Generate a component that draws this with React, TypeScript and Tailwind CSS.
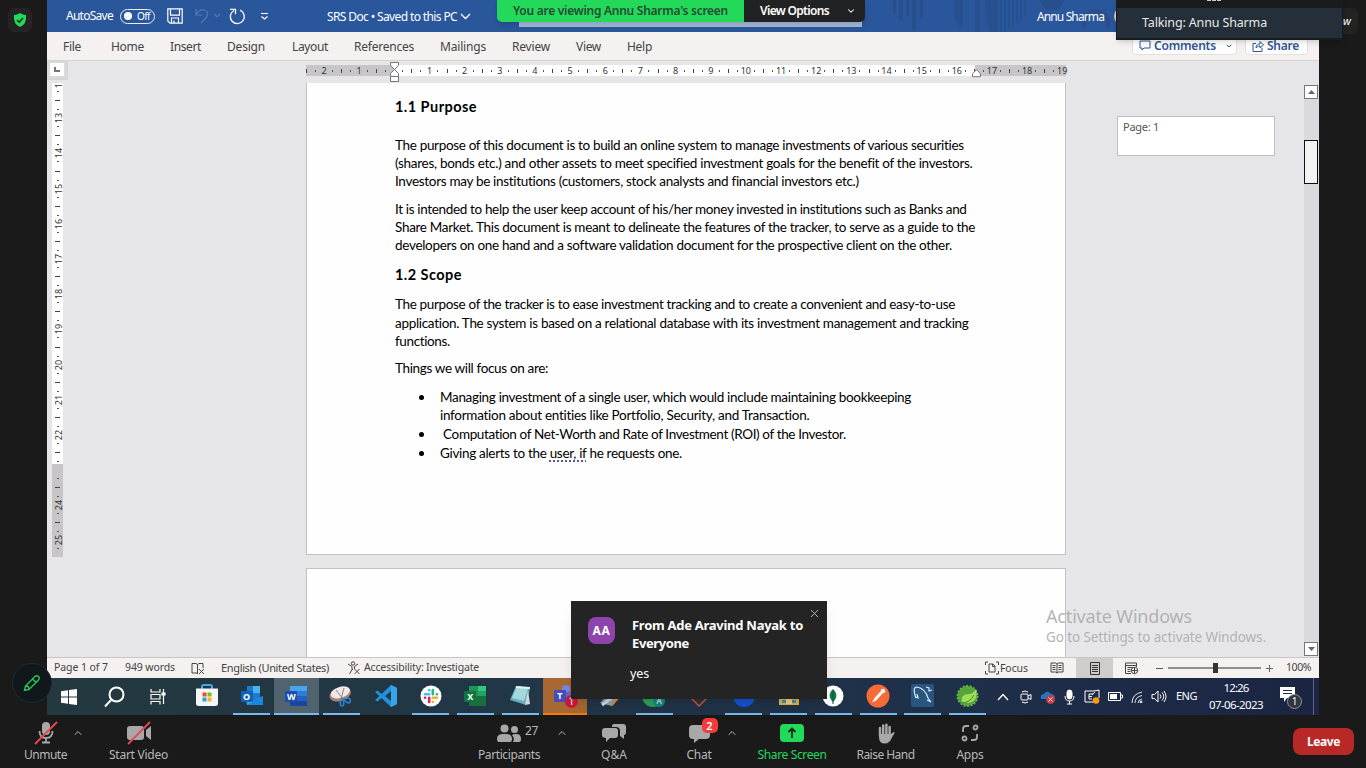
import { useLayoutEffect, useRef, useState, type ReactNode } from "react";
import { ChevronDown, ChevronUp, X } from "lucide-react";

/* Text run that is tracked so that it fills exactly w pixels. */
function Fit({ w, className = "", children }: { w: number; className?: string; children: ReactNode }) {
  const ref = useRef<HTMLSpanElement>(null);
  const [ls, setLs] = useState(0);
  useLayoutEffect(() => {
    const el = ref.current;
    if (!el) return;
    const n = (el.textContent || "").length || 1;
    setLs((w - el.getBoundingClientRect().width) / n);
  }, [w]);
  return (
    <span ref={ref} className={"inline-block shrink-0 whitespace-pre " + className} style={{ letterSpacing: ls + "px" }}>
      {children}
    </span>
  );
}

function TitleBar() {
  return (
    <div className="relative isolate flex h-8 shrink-0 items-center bg-[#2a569b] text-white">
      <svg className="absolute left-[833px] top-0 -z-10" width="250" height="32" fill="none">
        <g fill="#264f8c">
          <path d="M13 0h3v14h-3zM19 0h4v21h-4zM26 0h3v16h-3zM32 0h4v30h-4zM40 0h3v18h-3z" />
          <path d="M74 0h9v28q-6-2-9-12zM95 0h5v32h-5zM105 0h13v32h-8q-5-10-5-32z" opacity=".7" />
          <path d="M120 0h2v32h-2zM124 0h2v32h-2zM128 0h2v30h-2zM132 0h2v27h-2zM136 0h2v23h-2zM140 0h2v20h-2zM144 0h2v16h-2z" opacity=".7" />
          <path d="M160 0h24q-2 10-12 10T160 0z" />
        </g>
        <path d="M205 28a12 12 0 1 1 22 0" stroke="#274f8d" strokeWidth="5" />
      </svg>
      <Fit w={47} className="ml-[19px] text-xs">AutoSave</Fit>
      <div className="ml-[7px] flex h-[15px] w-[35px] items-center rounded-full border border-white/90 pl-[3px]">
        <span className="h-2 w-2 rounded-full bg-white" />
        <Fit w={13} className="ml-[5px] text-[10px] leading-3">Off</Fit>
      </div>
      <svg className="ml-[12px]" width="16" height="16" fill="none" stroke="#fff" strokeWidth="1.2">
        <path d="M.8.8h14.4v14.4H3L.8 13zM3.500.8v6.4h9V.8M4.500 15v-5h7v5M7 15v-2.500" />
      </svg>
      <svg className="ml-[11px]" width="26" height="16" fill="none" stroke="#5579b3" strokeWidth="1.2">
        <path d="M2 1v6h6M2 6.500C5 2 8 1.500 10 2c5 1.300 4 6 1 9l-4 4M20 6l3 3 3-3" />
      </svg>
      <svg className="ml-[9px]" width="17" height="17" fill="none" stroke="#fff" strokeWidth="1.300">
        <path d="M11 2.200A7 7 0 1 1 5 2.500M1 1.300h5.500v5" />
      </svg>
      <svg className="ml-[14px]" width="9" height="8" fill="none" stroke="#fff" strokeWidth="1.200">
        <path d="M1 1.500h7M1.500 4.500l3 2.500 3-2.500" />
      </svg>
      <Fit w={130} className="ml-[58px] mt-[2px] text-xs">SRS Doc • Saved to this PC</Fit>
      <svg className="ml-[3px]" width="11" height="7" fill="none" stroke="#fff" strokeWidth="1.300"><path d="M1 1l4.500 4.500L10 1" /></svg>
      <div className="mb-[5px] ml-[48px] h-[27px] w-[343px] bg-[#a5b9d8]" />
      <Fit w={67} className="ml-[175px] mt-[2px] text-xs">Annu Sharma</Fit>
      <span className="ml-[10px] h-5 w-5 rounded-full bg-[#d8cbbd]" />
    </div>
  );
}

const tabs: [string, number, number][] = [
  ["File", 16, 18], ["Home", 30, 33], ["Insert", 26, 31], ["Design", 26, 38], ["Layout", 27, 36],
  ["References", 26, 60], ["Mailings", 26, 46], ["Review", 26, 38], ["View", 26, 25], ["Help", 26, 25],
];

function Ribbon() {
  return (
    <div className="flex h-[29px] shrink-0 items-center border-b border-[#d9d3d0] bg-[#f4f1f0] text-[#444]">
      {tabs.map(([t, ml, w]) => (
        <span key={t} className="shrink-0 pb-[2px]" style={{ marginLeft: ml }}>
          <Fit w={w} className="text-xs">{t}</Fit>
        </span>
      ))}
      <div className="ml-auto mr-[11px] flex h-[23px] gap-2 self-start pt-0 text-[#2f5597]">
        <div className="flex w-[105px] items-center rounded-sm border border-[#e4e0de] bg-white pl-[6px] pt-[4px]">
          <svg width="12" height="11" fill="none" stroke="currentColor"><path d="M1 1h10v7H5L3 10V8H1z" /></svg>
          <Fit w={62} className="ml-[3px] text-xs font-semibold">Comments</Fit>
          <ChevronDown className="ml-[9px]" size={8} strokeWidth={3} />
        </div>
        <div className="flex w-[63px] items-center rounded-sm border border-[#e4e0de] bg-white pl-[6px] pt-[4px]">
          <svg width="12" height="12" fill="none" stroke="currentColor"><path d="M4 3.500H1v8h9V8M4 8c0-3 2-4 4-4V1.500L11.500 5 8 8V6C6 6 5 7 4 8z" /></svg>
          <Fit w={32} className="ml-[3px] text-xs font-semibold">Share</Fit>
        </div>
      </div>
    </div>
  );
}

const hNums = ["2", "1", "", ...Array.from({ length: 18 }, (_, i) => String(i + 1)), ""];
const vNums = ["12", "13", "14", "15", "16", "17", "18", "19", "20", "21", "22", "", "24", "25"];

function HorizontalRuler() {
  return (
    <div className="relative mt-[4px] h-[11px]">
      <div className="flex h-[11px] w-[760px] items-center overflow-hidden bg-[linear-gradient(to_right,#c7c5c7_88px,#fff_88px,#fff_669px,#c7c5c7_669px)]">
        {hNums.map((n, i) => (
          <div key={i} className="flex h-[11px] w-[35.170px] shrink-0 items-center">
            <span className="h-1 w-px bg-[#444]" />
            <span className="ml-[8px] h-[2px] w-px bg-[#555]" />
            <span className="ml-px w-[14px] text-center text-[9px] leading-[11px] text-[#333]">{n}</span>
            <span className="ml-px h-[2px] w-px bg-[#555]" />
          </div>
        ))}
      </div>
      <svg className="absolute -top-[3px] left-[84px]" width="9" height="21" fill="#fff" stroke="#777">
        <path d="M.5.500h8v3l-4 4 4 4v3h-8v-3l4-4-4-4zM.5 14.500h8v5h-8z" />
      </svg>
      <svg className="absolute left-[666px] top-[4px]" width="9" height="9" fill="#fff" stroke="#777">
        <path d="M4.500.700l4 4v3h-8v-3z" />
      </svg>
      <span className="absolute left-[751px] top-0 text-[9px] leading-[11px] text-[#333]">19</span>
    </div>
  );
}

function VerticalRuler() {
  return (
    <div className="ml-[5px] mt-[3px] flex h-[474px] w-[11px] flex-col overflow-hidden bg-[linear-gradient(to_bottom,#fff_381px,#c7c5c7_381px)]">
      {vNums.map((n, i) => (
        <div key={i} className={"flex h-[35.200px] w-[11px] shrink-0 flex-col items-center " + (i === 0 ? "-mt-[18px]" : "")}>
          <span className="h-px w-[5px] bg-[#444]" />
          <span className="mt-[8px] h-px w-[2px] bg-[#555]" />
          <span className="mt-px flex h-[14px] w-[11px] -rotate-90 items-center justify-center text-[9px] leading-[11px] text-[#333]">{n}</span>
          <span className="mt-px h-px w-[2px] bg-[#555]" />
        </div>
      ))}
    </div>
  );
}

function Line({ w, children, className = "" }: { w: number; children: ReactNode; className?: string }) {
  return (
    <p className={"flex h-[18px] items-center text-[13.500px] leading-[18px] " + className}>
      <Fit w={w}>{children}</Fit>
    </p>
  );
}

function Bullet({ w, children, className = "", more }: { w: number; children: ReactNode; className?: string; more?: ReactNode }) {
  return (
    <li className={"flex items-start text-[13.500px] leading-[18px] " + className}>
      <span className="ml-[24px] mr-[16px] mt-[7px] h-[5px] w-[5px] rounded-full bg-black" />
      <div className="flex flex-col items-start">
        <Fit w={w}>{children}</Fit>
        {more}
      </div>
    </li>
  );
}

function Page() {
  return (
    <div className="mt-[7px] h-[472px] w-[760px] border-x border-b border-[#c3c1c1] bg-[#fefefe] pl-[88px] pt-[13px] font-[Lato,sans-serif] text-black">
      <h2 className="flex h-[22px] items-center text-[14.500px] font-bold"><Fit w={82}>1.1 Purpose</Fit></h2>
      <Line w={569} className="mt-[18px]">The purpose of this document is to build an online system to manage investments of various securities</Line>
      <Line w={577}>(shares, bonds etc.) and other assets to meet specified investment goals for the benefit of the investors.</Line>
      <Line w={464}>Investors may be institutions (customers, stock analysts and financial investors etc.)</Line>
      <Line w={572} className="mt-[10px]">It is intended to help the user keep account of his/her money invested in institutions such as Banks and</Line>
      <Line w={580}>Share Market. This document is meant to delineate the features of the tracker, to serve as a guide to the</Line>
      <Line w={557}>developers on one hand and a software validation document for the prospective client on the other.</Line>
      <h2 className="mt-[10px] flex h-[22px] items-center text-[14.500px] font-bold"><Fit w={67}>1.2 Scope</Fit></h2>
      <Line w={560} className="mt-[9px]">The purpose of the tracker is to ease investment tracking and to create a convenient and easy-to-use</Line>
      <Line w={574} className="mt-px">application. The system is based on a relational database with its investment management and tracking</Line>
      <Line w={55}>functions.</Line>
      <Line w={153} className="mt-[9px]">Things we will focus on are:</Line>
      <ul className="mt-[11px]">
        <Bullet w={471} more={<Fit w={370}>information about entities like Portfolio, Security, and Transaction.</Fit>}>
          Managing investment of a single user, which would include maintaining bookkeeping
        </Bullet>
        <Bullet w={406} className="mt-px">{" Computation of Net-Worth and Rate of Investment (ROI) of the Investor."}</Bullet>
        <Bullet w={242} className="mt-px">
          Giving alerts to the <span className="underline decoration-[#5558a8] decoration-dotted decoration-2 underline-offset-2">user, if</span> he requests one.
        </Bullet>
      </ul>
    </div>
  );
}

function Workspace() {
  return (
    <div className="flex h-[596px] shrink-0 overflow-hidden bg-[#e6e6e8]">
      <div className="w-[259px] shrink-0">
        <div className="flex h-[19px] w-[21px] items-center justify-center border-b-2 border-r-2 border-[#d5d4d6] bg-[#d9d8da]">
          <div className="flex h-[13px] w-[14px] items-center justify-center bg-white">
            <span className="h-[5px] w-[6px] border-b-2 border-l-2 border-[#777]" />
          </div>
        </div>
        <VerticalRuler />
      </div>
      <div className="w-[760px] shrink-0">
        <HorizontalRuler />
        <Page />
        <div className="mt-[13px] h-[102px] w-[760px] border border-[#c3c1c1] bg-[#fefefe]" />
      </div>
      <div className="flex flex-1 justify-between">
        <div className="pl-[51px] pt-[55px]">
          <div className="h-[40px] w-[158px] border border-[#c0bfc1] bg-white pl-[5px] pt-[2px] text-[11px] leading-[15px] text-[#555]">
            <Fit w={36}>Page: 1</Fit>
          </div>
        </div>
        <div className="mt-[24px] flex h-[571px] w-[15px] flex-col items-start bg-[#dad9db]">
          <div className="flex h-[14px] w-[14px] shrink-0 items-center justify-center border border-[#777] bg-white">
            <svg width="7" height="4"><path d="M0 4L3.500 0 7 4z" fill="#666" /></svg>
          </div>
          <div className="mt-[41px] h-[44px] w-[14px] shrink-0 border border-[#111] bg-[#f3f3f3]" />
          <div className="mt-auto flex h-[14px] w-[14px] shrink-0 items-center justify-center border border-[#777] bg-white">
            <svg width="7" height="4"><path d="M0 0h7L3.500 4z" fill="#666" /></svg>
          </div>
        </div>
      </div>
    </div>
  );
}

function StatusBar() {
  return (
    <div className="flex h-[21px] shrink-0 items-center border-t border-[#c8c6c5] bg-[#f4f1f0] text-[10.500px] text-[#444]">
      <Fit w={54} className="ml-[7px]">Page 1 of 7</Fit>
      <Fit w={50} className="ml-[17px]">949 words</Fit>
      <svg className="ml-[16px]" width="14" height="13" fill="none" stroke="#444"><path d="M6.500 11H1V1.500h4l1.500 1 1.500-1h4V6M6.500 2.500V12M8 7l5 5M13 7l-5 5" /></svg>
      <Fit w={108} className="ml-[16px] text-[11px]">English (United States)</Fit>
      <svg className="ml-[18px]" width="14" height="14" fill="none" stroke="#444"><circle cx="6" cy="2.500" r="1.700" /><path d="M1 3l4 2.500v3L2.500 13M11 3L7.500 5.500V8M5 9l1-1M7.500 8l5 5M12.500 8l-5 5" /></svg>
      <Fit w={115} className="ml-[3px]">Accessibility: Investigate</Fit>
      <svg className="ml-[506px]" width="14" height="14" fill="none" stroke="#444"><path d="M3 1H.5v3M.5 10v3H3M11 1h2.500v3M13.500 10v3H11M4 3h4l2 2v6H4zM7.500 3v2.500H10" /></svg>
      <Fit w={28} className="ml-[1px] mt-px">Focus</Fit>
      <svg className="ml-[22px]" width="14" height="12" fill="none" stroke="#444"><path d="M7 2v9M7 2L5.500 1H1v9h4.500L7 11l1.500-1H13V1H8.500zM2.500 3.500h3M2.500 5.500h3M2.500 7.500h3M8.500 3.500h3M8.500 5.500h3M8.500 7.500h3" /></svg>
      <div className="ml-[12px] flex h-5 w-[37px] items-center justify-center bg-[#cfcccc]">
        <svg width="10" height="13" fill="none" stroke="#333"><path d="M.5.500h9v12h-9zM2 3.500h6M2 5.500h6M2 7.500h6M2 9.500h6" /></svg>
      </div>
      <svg className="ml-[12px]" width="14" height="13" fill="none" stroke="#444"><path d="M6 11.500H.5V1h11v4M.5 3.500h11M2.500 5.500h5M2.500 7.500h3M2.500 9.500h3" /><circle cx="9.500" cy="8.500" r="3.200" /><path d="M6.500 8.500h6M9.500 5.500v6" /></svg>
      <span className="ml-[17px] h-px w-[7px] bg-[#555]" />
      <div className="ml-[5px] flex h-[10px] w-[93px] items-center bg-[linear-gradient(to_bottom,transparent_4px,#908e8e_4px,#908e8e_6px,transparent_6px)] pl-[45px]">
        <span className="h-[10px] w-[5px] bg-[#333]" />
      </div>
      <svg className="ml-[5px]" width="7" height="7" stroke="#666"><path d="M0 3.500h7M3.500 0v7" /></svg>
      <Fit w={25} className="ml-[13px]">100%</Fit>
    </div>
  );
}

function OfficeTile({ letter, tile, back }: { letter: string; tile: string; back: ReactNode }) {
  return (
    <div className="relative h-[22px] w-[24px]">
      <svg className="absolute inset-0" width="24" height="22">{back}<rect x="1" y="6" width="12" height="11" rx="1" fill={tile} /></svg>
      <span className="absolute left-px top-[6px] w-3 text-center text-[9px] font-bold leading-[11px] text-white">{letter}</span>
    </div>
  );
}

const apps: { icon: ReactNode; run?: boolean; cls?: string }[] = [
  { icon: (
    <svg width="22" height="23"><path d="M6 5V2.500Q6 1 7.500 1h7Q16 1 16 2.500V5" fill="none" stroke="#3fa9ec" strokeWidth="2" /><path d="M0 4.500h22v15q0 2.500-3 2.500H3q-3 0-3-2.500z" fill="#f4f6f8" /><path fill="#e8502c" d="M6.500 8.500h4v4h-4z" /><path fill="#80b829" d="M11.500 8.500h4v4h-4z" /><path fill="#2a9fe3" d="M6.500 13.500h4v4h-4z" /><path fill="#fab615" d="M11.500 13.500h4v4h-4z" /></svg>) },
  { run: true, icon: <OfficeTile letter="O" tile="#0f64b8" back={<><path d="M7 1h13v16H7z" fill="#1c7ad0" /><path d="M13 1h7v7h-7z" fill="#48b3ef" /><path d="M5 11l9 5 9-5v9H7z" fill="#35a2ea" /><path d="M23 11v9H7z" fill="#1c86dc" /></>} /> },
  { run: true, cls: "bg-[#50636e]", icon: <OfficeTile letter="W" tile="#1950b0" back={<><path d="M6 1h17v5H6z" fill="#48a4ed" /><path d="M6 6h17v5H6z" fill="#2f7cd8" /><path d="M6 11h17v5H6z" fill="#2160c4" /><path d="M6 16h17v5H6z" fill="#1b46a0" /></>} /> },
  { run: true, icon: (
    <svg width="24" height="22"><ellipse cx="11" cy="9.500" rx="11" ry="6.500" fill="#a5827c" transform="rotate(-18 11 9)" /><ellipse cx="11.500" cy="7.500" rx="10" ry="5.500" fill="#f0e8e6" transform="rotate(-18 11 8)" /><path d="M7 5l7 9M15 3l-3 11" stroke="#94817c" /><g fill="none" stroke="#2d82ca" strokeWidth="1.600"><ellipse cx="13" cy="18" rx="1.800" ry="3" /><path d="M14 14l6-1q3 3 0 5-2 0-6-4z" /></g></svg>) },
  { icon: (
    <svg width="22" height="22"><path d="M16 0l6 3v16l-6 3L6.500 13 2.500 16.500 0 15l4.500-4L0 7l2.500-1.500L6.500 9zM16 6l-6 5 6 5z" fill="#2490dc" fillRule="evenodd" /><path d="M16 0l6 3v16l-6 3z" fill="#3aa4ea" /></svg>) },
  { run: true, icon: (
    <svg width="22" height="22"><circle cx="11" cy="11" r="10.500" fill="#fff" /><g strokeWidth="2.600" strokeLinecap="round"><path d="M9.200 5v.2M5 9.200h4.200" stroke="#36c5f0" /><path d="M12.800 5v4.200M17 9.200h-.2" stroke="#2eb67d" /><path d="M12.800 12.800H17M12.800 17v-.2" stroke="#ecb22e" /><path d="M9.200 12.800V17M5 12.800h.2" stroke="#e01e5a" /></g></svg>) },
  { run: true, icon: <OfficeTile letter="X" tile="#10743f" back={<><path d="M6 1h9v20H6z" fill="#1c9658" /><path d="M15 1h8v10h-8z" fill="#35c481" /><path d="M6 11h17v10H6z" fill="#17713f" /><path d="M15 6h8v5h-8z" fill="#22a267" /></>} /> },
  { run: true, icon: (
    <svg width="22" height="21"><path d="M7 1l14 2-4 17L1 15z" fill="#65aebb" /><path d="M8 1l11 2-4 13L3 13z" fill="#a5d8dc" /><path d="M7 1l14 1v2L7 3z" fill="#e9f2f2" /><path d="M19 5l2 14-5 1z" fill="#d4dadb" /></svg>) },
  { cls: "bg-[#a76833]", icon: (
    <div className="relative h-[22px] w-[24px]">
      <svg width="24" height="22"><circle cx="13" cy="4" r="4" fill="#7b83eb" /><path d="M8 7h14v8q-3 7-10 5z" fill="#5f67c9" /><rect x="1" y="5" width="12" height="12" rx="1" fill="#464eb8" /></svg>
      <span className="absolute left-px top-[5px] w-3 text-center text-[9px] font-bold leading-3 text-white">T</span>
      <span className="absolute left-3 top-[10px] h-[13px] w-[13px] rounded-full bg-[#ce1838] text-center text-[10px] leading-[13px] text-white">1</span>
    </div>) },
  { icon: <svg width="22" height="22"><path d="M1 18L14 5l7 5-8 11z" fill="#8aa7b8" /><path d="M3 20L19 8" stroke="#d4dadd" strokeWidth="3" /><path d="M13 20l6-7" stroke="#d98b35" strokeWidth="2" /></svg> },
  { run: true, icon: (
    <div className="relative h-[22px] w-[24px]">
      <svg width="24" height="22"><circle cx="11" cy="11" r="11" fill="#2da35a" /><circle cx="17" cy="16" r="6" fill="#14897c" /></svg>
      <span className="absolute left-[14px] top-[11px] text-[8px] leading-[10px] text-white">A</span>
    </div>) },
  { icon: <svg width="22" height="22"><path d="M11 0l11 11-11 11L0 11z" fill="#d25334" /><path d="M4 13h14l-7 7z" fill="#31343a" /></svg> },
  { run: true, icon: <svg width="22" height="22"><circle cx="11" cy="11" r="11" fill="#1554d4" /></svg> },
  { run: true, icon: <svg width="22" height="22"><path d="M1 4h20v16H1z" fill="#e0b446" /><path d="M4 15h14v3H4z" fill="#3c8cc8" /><path d="M8 14h6v5H8z" fill="#efd37a" /></svg> },
  { run: true, icon: <svg width="22" height="22"><circle cx="11" cy="11" r="10.500" fill="#fff" /><path d="M11 4c5 5 4 9 0 13-4-4-5-8 0-13z" fill="#137a4c" /><path d="M11 6v13" stroke="#0c5434" /></svg> },
  { run: true, icon: <svg width="24" height="24"><circle cx="12" cy="12" r="11.500" fill="#f76b38" /><path d="M6 18.500l3-5 2 2.500z" fill="#fff" /><path d="M9.500 15l6-6.500" stroke="#fff" strokeWidth="2.800" /><circle cx="17" cy="7" r="2.300" fill="#fff" /></svg> },
  { run: true, icon: <svg width="23" height="23"><rect width="23" height="23" rx="2" fill="#275780" /><path d="M5 14Q1 3 6 3c5 1 9 4 11 11l3 4-4-2M5 13l2 1-1-4M15 3l3 1 0 3 3-1" fill="none" stroke="#dce8ef" strokeWidth="1.200" /></svg> },
  { run: true, icon: <svg width="24" height="24"><circle cx="11.500" cy="12" r="10" fill="#55a63a" stroke="#64b545" strokeWidth="2" strokeDasharray="2 1.500" /><path d="M20 5c3 12-6 16-14 13-1-5 1-8 7-8 3 0 5-2 7-5z" fill="#a0dd58" /><path d="M5 19q9 0 13-8" stroke="#398e31" fill="none" /></svg> },
];

function Taskbar() {
  return (
    <div className="flex h-[37px] shrink-0 items-center bg-[linear-gradient(to_right,#24383f,#213647_40%,#1f3049_70%,#1b2543)] text-white">
      <div className="flex w-[44.500px] justify-center"><svg width="16" height="16" fill="#fff"><path d="M0 2.200L7 1.200v6.300H0zM8 1l8-1v7.500H8zM0 8.500h7v6.300l-7-1zM8 8.500h8V16l-8-1z" /></svg></div>
      <div className="flex w-[44.500px] justify-center"><svg width="22" height="22" fill="none" stroke="#fff" strokeWidth="2"><circle cx="13.500" cy="8.500" r="7" /><path d="M8.500 13.500L2 20.500" /></svg></div>
      <div className="flex w-[44.500px] justify-center"><svg width="16" height="16" fill="none" stroke="#fff" strokeWidth="1.200"><path d="M1 0v3h9V0M1 15.500v-3h9v3M1 5.500h9v4.500H1zM13.500 0v15" /><path d="M12 4h3v2h-3z" fill="#fff" /></svg></div>
      <div className="ml-[4px] flex h-full">
        {apps.map((a, i) => (
          <div key={i} className={"flex h-full w-[44.750px] shrink-0 flex-col items-center " + (a.cls || "")}>
            <div className="flex h-[35px] items-center">{a.icon}</div>
            <div className={"h-[2px] " + (i === 8 ? "w-full bg-[#f67a0c]" : i === 2 ? "w-full bg-[#76b9ed]" : a.run ? "w-[37px] bg-[#76b9ed]" : "w-0")} />
          </div>
        ))}
      </div>
      <svg className="ml-[7px]" width="12" height="8" fill="none" stroke="#fff" strokeWidth="1.300"><path d="M1 7l5-5.500L11 7" /></svg>
      <svg className="ml-[11px]" width="12" height="14" fill="none" stroke="#fff"><rect x="1" y="4" width="7" height="6" rx="1" /><path d="M8 6l3-1.500v5L8 8M2 2q3-2 6 0M2 12q3 2 6 0" /></svg>
      <svg className="ml-[8px]" width="16" height="14"><path d="M1 9q-1-5 3-5 3-5 7 0 4 0 4 5z" fill="#2575c3" /><circle cx="10.500" cy="9.500" r="4.500" fill="#c43c41" /><path d="M8.500 7.500l4 4M12.500 7.500l-4 4" stroke="#fff" /></svg>
      <svg className="ml-[8px]" width="11" height="16" fill="none" stroke="#fff"><rect x="3" y="1" width="5" height="9" rx="2.500" fill="#fff" /><path d="M1 7q0 5 4.500 5T10 7M5.500 12v3M3 15h5" /></svg>
      <svg className="ml-[9px]" width="17" height="15" fill="none" stroke="#fff"><path d="M1 2h9l5-1v8M1 2v11h8M9 5H5v5h3M5 7.500h3M11 3l-3 3" /><circle cx="12" cy="11.500" r="3.300" fill="#fa9a16" stroke="none" /></svg>
      <svg className="ml-[7px]" width="15" height="9" fill="none" stroke="#fff"><path d="M.5.500h12v8H.5zM13 3h1.500v3H13" /><path d="M2 2h7v5H2z" fill="#fff" stroke="none" /></svg>
      <svg className="ml-[8px]" width="12" height="12" fill="none" stroke="#dfe3ea"><path d="M1 12Q1 3 11 1M4 12q0-6 7-7.500M7 12q0-3 4-4" /><circle cx="10" cy="11" r="1" fill="#fff" /></svg>
      <svg className="ml-[8px]" width="16" height="13" fill="none" stroke="#fff"><path d="M1 4.500h2.500L7 1v11L3.500 8.500H1zM9 4.500q2 2 0 4M11 2.500q3.500 4 0 8M13 1q4 5.500 0 11" /></svg>
      <Fit w={21} className="ml-[9px] text-[11px]">ENG</Fit>
      <div className="ml-[12px] flex flex-col items-center pb-[2px] text-[11.500px] leading-[17px]">
        <Fit w={25}>12:26</Fit>
        <Fit w={54}>07-06-2023</Fit>
      </div>
      <div className="relative ml-[17px] mt-[3px] h-[23px] w-[24px]">
        <svg width="16" height="15"><path d="M0 0h15v11H7l-3 4v-4H0z" fill="#fff" /><path d="M3 3.500h9M3 6.500h9" stroke="#1e2b47" /></svg>
        <span className="absolute left-[7px] top-[7px] h-[15px] w-[15px] rounded-full border border-[#93969c] bg-[#30353e] text-center text-[10px] leading-[13px]">1</span>
      </div>
      <span className="ml-[9px] h-full w-px bg-[#5e6681]" />
    </div>
  );
}

function Tool({ cls, icon, label, w, labelCls = "" }: { cls: string; icon: ReactNode; label: string; w: number; labelCls?: string }) {
  return (
    <div className={"flex shrink-0 flex-col items-center " + cls}>
      <div className="flex h-[22px] items-center">{icon}</div>
      <Fit w={w} className={"mt-[2px] text-xs leading-[17px] " + labelCls}>{label}</Fit>
    </div>
  );
}

function MeetingBar() {
  return (
    <div className="flex h-[53px] shrink-0 items-start bg-[#1a1a1a] pt-[7px] text-[#b8b8b8]">
      <Tool cls="ml-[23px] w-[45px]" label="Unmute" w={43} icon={
        <svg className="-mt-px" width="24" height="24" fill="none" stroke="#a8a8a8" strokeWidth="1.800"><rect x="8" y="1" width="8" height="13" rx="4" fill="#a8a8a8" stroke="none" /><path d="M5.500 10q0 7 6.500 7t6.500-7M12 17v4M8 21.500h8" /><path d="M1 23L23 1" stroke="#e8484e" /></svg>} />
      <ChevronUp className="ml-[4px] mt-[5px]" size={12} />
      <Tool cls="ml-[4px] w-[101px]" label="Start Video" w={59} icon={
        <svg className="-mt-px" width="26" height="24"><rect x="1" y="5" width="17" height="14" rx="3" fill="#a8a8a8" /><path d="M25 5v14l-5-4V9z" fill="#a8a8a8" /><path d="M2 23L24 1" stroke="#e8484e" strokeWidth="1.800" /></svg>} />
      <Tool cls="ml-[280px] w-[80px]" label="Participants" w={62} icon={
        <div className="flex items-start pl-[17px]">
          <svg width="25" height="18" fill="#a8a8a8"><circle cx="7.500" cy="4.500" r="4" /><circle cx="17.500" cy="5.500" r="3.500" /><path d="M0 15q0-5 6-5h3q6 0 6 5 0 3-2 3H2q-2 0-2-3zM15 11q1-1 4-1 5 0 5 5 0 3-2 3h-6q2-4-1-7z" /></svg>
          <Fit w={13} className="ml-[3px] text-xs leading-[13px]">27</Fit>
        </div>} />
      <ChevronUp className="ml-[7px] mt-[5px]" size={12} />
      <Tool cls="ml-[7px] w-[78px]" label="Q&A" w={26} icon={
        <svg width="24" height="20" fill="#a8a8a8"><path d="M12 1h9q3 0 3 3v5q0 3-2 3v4l-4-3V8q0-4-4-4h-4q0-3 2-3z" /><path d="M3 5h10q3 0 3 3v4q0 3-3 3H8l-4 4v-4q-4 0-4-3V8q0-3 3-3z" /></svg>} />
      <Tool cls="ml-[22px] w-[48px]" label="Chat" w={25} icon={
        <div className="relative">
          <svg width="21" height="20" fill="#a8a8a8"><path d="M4 2h13q4 0 4 4v6q0 4-4 4h-7l-5 4v-4H4q-4 0-4-4V6q0-4 4-4z" /></svg>
          <span className="absolute -top-[5px] left-[13px] h-[15px] w-[16px] rounded-[5px] bg-[#f33a3c] text-center text-[11px] font-semibold leading-[15px] text-white">2</span>
        </div>} />
      <ChevronUp className="ml-[3px] mt-[5px]" size={12} />
      <Tool cls="ml-[3px] w-[102px]" label="Share Screen" w={69} labelCls="text-[#25d961]" icon={
        <svg width="24" height="18"><rect width="24" height="18" rx="4" fill="#23d959" /><path d="M12 14V5M8.500 8L12 4.500 15.500 8" fill="none" stroke="#18251c" strokeWidth="1.800" /></svg>} />
      <Tool cls="w-[85px]" label="Raise Hand" w={58} icon={
        <svg width="18" height="21" fill="none" stroke="#a8a8a8" strokeWidth="2.500" strokeLinecap="round"><path d="M3 5v8M6.200 2.500V12M9.400 1.700V12M12.600 4v9" /><path d="M2 11h12l2.500-2q2 0 .5 2l-4 7q-2 2.500-5 2.500-6 0-6-6z" fill="#a8a8a8" stroke="none" /></svg>} />
      <Tool cls="w-[84px]" label="Apps" w={27} icon={
        <svg width="18" height="18" fill="none" stroke="#a8a8a8" strokeWidth="1.800"><path d="M8 2H5Q2 2 2 5v3M10 16h3q3 0 3-3v-3" /><circle cx="14.500" cy="3.500" r="2" /><circle cx="3.500" cy="14.500" r="2" /></svg>} />
      <button className="ml-auto mr-[12px] mt-[6px] h-[27px] w-[61px] rounded-lg bg-[#b82827] text-xs font-bold text-white"><Fit w={33}>Leave</Fit></button>
    </div>
  );
}

function Overlays() {
  return (
    <>
      <div className="absolute left-2 top-2 flex h-6 w-6 items-center justify-center rounded-md bg-[#242424]">
        <svg width="14" height="14"><path d="M7 0q3 2 6 2 1 9-6 12Q0 11 1 2q3 0 6-2z" fill="#23d959" /><path d="M4 7l2.200 2.200L10 5" fill="none" stroke="#1a2a1e" strokeWidth="1.600" /></svg>
      </div>
      <div className="absolute left-[497px] top-0 flex h-[22px] w-[368px] overflow-hidden rounded-b-[5px] text-xs shadow-md">
        <div className="flex w-[247px] items-center justify-center bg-[#23d959] font-semibold text-[#274b34]"><Fit w={215}>You are viewing Annu Sharma's screen</Fit></div>
        <div className="flex flex-1 items-center bg-[#212224] pl-[16px] font-semibold text-white">
          <Fit w={69}>View Options</Fit>
          <ChevronDown className="ml-[17px]" size={10} strokeWidth={2.500} />
        </div>
      </div>
      <div className="absolute left-[1330px] top-[8px] flex h-[26px] w-[28px] items-center justify-end rounded-md bg-[#232323] pr-[7px] text-[11px] italic text-white">w</div>
      <div className="absolute left-[1116px] top-0 h-[40px] w-[227px] bg-[#191b1d] px-px pb-[2px] pt-[8px] shadow-md">
        <div className="absolute left-[91px] top-0 flex gap-px"><i className="h-px w-1 bg-[#ccc]" /><i className="h-px w-1 bg-[#ccc]" /><i className="h-px w-1 bg-[#ccc]" /></div>
        <div className="flex h-[30px] items-center bg-[#252f39] pl-[25px] text-[12.500px] text-[#e8e8e8]"><Fit w={125}>Talking: Annu Sharma</Fit></div>
      </div>
      <div className="absolute left-[12px] top-[663px] flex h-[40px] w-[40px] items-center justify-center rounded-full border border-[#242b2e] bg-[#11181b]">
        <svg width="18" height="18" fill="none" stroke="#28ce59" strokeWidth="1.300"><path d="M1.500 16.500l1-4.500L12 2.500q2-1.500 3.500 0t0 3.500L6 15.500zM9.500 5l3.500 3.500M6 15q0-3-3-3" /></svg>
      </div>
      <div className="absolute left-[1046px] top-[605px] flex flex-col items-start text-[#a6a6a8]/85">
        <Fit w={146} className="text-[18px] leading-[22px]">Activate Windows</Fit>
        <Fit w={220} className="text-[13.500px] leading-[20px]">Go to Settings to activate Windows.</Fit>
      </div>
      <div className="absolute left-[571px] top-[601px] flex h-[98px] w-[256px] bg-[#242424] text-white shadow-lg">
        <div className="ml-[17px] mt-[16px] flex h-[27px] w-[27px] items-center justify-center rounded-[8px] bg-[#8e44ad] text-[12px] font-bold"><Fit w={18}>AA</Fit></div>
        <div className="ml-[17px] mt-[15px] flex flex-col items-start text-[13px] leading-[18px]">
          <Fit w={171} className="font-bold">From Ade Aravind Nayak to</Fit>
          <Fit w={57} className="font-bold">Everyone</Fit>
          <Fit w={19} className="-ml-[2px] mt-[13px] text-[12.500px]">yes</Fit>
        </div>
        <X className="absolute right-[6px] top-[6px] text-[#b5b5b5]" size={13} strokeWidth={1.800} />
      </div>
    </>
  );
}

export default function App() {
  return (
    <div className="relative flex h-[768px] w-[1366px] flex-col overflow-hidden bg-[#1a1a1a] font-['Noto_Sans',sans-serif]">
      <div className="mx-[47px] flex h-[715px] w-[1272px] shrink-0 flex-col overflow-hidden">
        <TitleBar />
        <Ribbon />
        <Workspace />
        <StatusBar />
        <Taskbar />
      </div>
      <MeetingBar />
      <Overlays />
    </div>
  );
}
